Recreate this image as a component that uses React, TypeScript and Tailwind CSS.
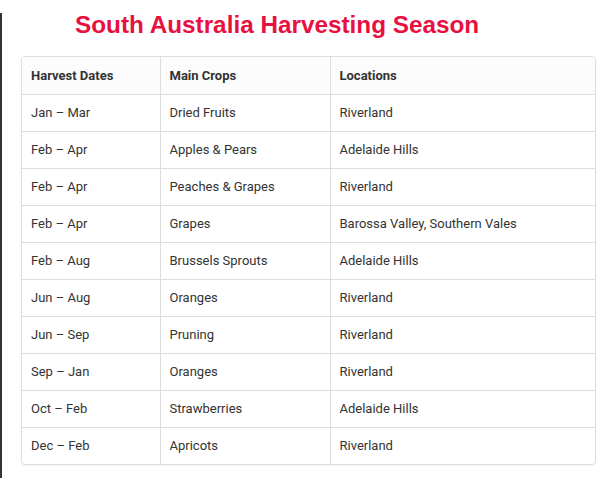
import React from "react";

const rows: [string, string, string][] = [
  ["Jan – Mar", "Dried Fruits", "Riverland"],
  ["Feb – Apr", "Apples & Pears", "Adelaide Hills"],
  ["Feb – Apr", "Peaches & Grapes", "Riverland"],
  ["Feb – Apr", "Grapes", "Barossa Valley, Southern Vales"],
  ["Feb – Aug", "Brussels Sprouts", "Adelaide Hills"],
  ["Jun – Aug", "Oranges", "Riverland"],
  ["Jun – Sep", "Pruning", "Riverland"],
  ["Sep – Jan", "Oranges", "Riverland"],
  ["Oct – Feb", "Strawberries", "Adelaide Hills"],
  ["Dec – Feb", "Apricots", "Riverland"],
];

export default function App() {
  return (
    <div className="w-[615px] h-[478px] bg-white overflow-hidden flex">
      <div className="w-[2px] mt-[13px] bg-[#333] shrink-0" />
      <div className="flex-1 pl-[19px] pr-[19px]">
        <h1 className="h-[54px] pl-[54px] pt-[9px] text-[24.3px] leading-[32px] font-bold text-[#e8103f] font-['Liberation_Sans',Arial,sans-serif]">
          South Australia Harvesting Season
        </h1>
        <div className="mt-[2px] border border-[#dddddd] rounded-[4px] overflow-hidden shadow-[0_1px_2px_rgba(0,0,0,0.05)]">
          <table className="w-full border-collapse font-['Roboto',sans-serif] text-[13px] text-[#333]">
            <colgroup>
              <col className="w-[138px]" />
              <col className="w-[170px]" />
              <col />
            </colgroup>
            <thead>
              <tr className="h-[37px] bg-[#fcfcfc]">
                <th className="text-left font-bold px-[9px] border-r border-[#dddddd]">Harvest Dates</th>
                <th className="text-left font-bold px-[9px] border-r border-[#dddddd]">Main Crops</th>
                <th className="text-left font-bold px-[9px]">Locations</th>
              </tr>
            </thead>
            <tbody>
              {rows.map((r, i) => (
                <tr key={i} className="h-[37px] border-t border-[#dddddd]">
                  <td className="px-[9px] border-r border-[#dddddd]">{r[0]}</td>
                  <td className="px-[9px] border-r border-[#dddddd]">{r[1]}</td>
                  <td className="px-[9px]">{r[2]}</td>
                </tr>
              ))}
            </tbody>
          </table>
        </div>
      </div>
    </div>
  );
}
